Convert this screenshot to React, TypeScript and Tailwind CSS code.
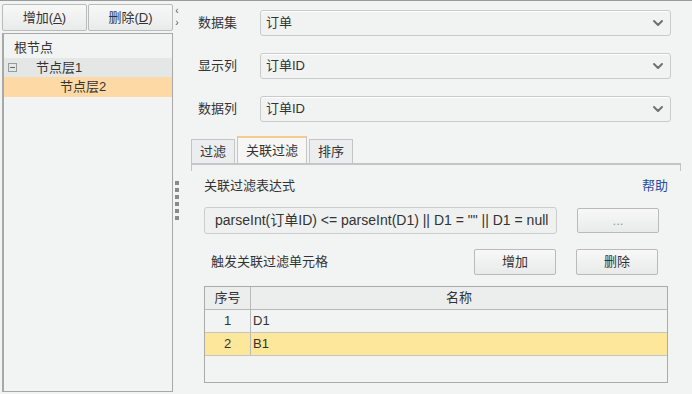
import React from "react";

const FONT = { fontFamily: '"Liberation Sans", "Noto Sans CJK SC", sans-serif' };

function Chevron() {
  return (
    <svg width="12" height="8" viewBox="0 0 12 8" className="shrink-0">
      <path d="M2 2 L6 6 L10 2" fill="none" stroke="#707070" strokeWidth="2" strokeLinecap="round" strokeLinejoin="round" />
    </svg>
  );
}

function SelectRow({ label, value }: { label: string; value: string }) {
  return (
    <div className="flex items-center h-[26px]">
      <span className="w-[62px] text-[13px] text-[#333]">{label}</span>
      <div className="flex-1 h-full flex items-center justify-between pl-[5px] pr-[6px] border border-[#c9cbcb] rounded-[3px] bg-[#f1f2f2] shadow-[inset_0_1px_0_#fff]">
        <span className="text-[13px] text-[#333]">{value}</span>
        <Chevron />
      </div>
    </div>
  );
}

function Btn({ children, className = "" }: { children: React.ReactNode; className?: string }) {
  return (
    <div className={"flex items-center justify-center border border-[#b9bbbb] rounded-[2px] bg-gradient-to-b from-[#f8f8f8] to-[#e9eaea] text-[13px] text-[#333] " + className}>
      {children}
    </div>
  );
}

export default function App() {
  return (
    <div className="w-[692px] h-[394px] bg-[#f2f3f3] border-t border-[#9a9a9a] flex overflow-hidden" style={FONT}>
      {/* Left tree panel */}
      <div className="w-[171px] ml-[2px] flex flex-col">
        <div className="flex gap-[1px] mt-[3px] h-[27px]">
          <Btn className="w-[85px]">增加(<span className="underline">A</span>)</Btn>
          <Btn className="flex-1">删除(<span className="underline">D</span>)</Btn>
        </div>
        <div className="mt-[2px] h-[359px] border border-[#a8a8a8] border-l-2 bg-[#f2f3f3] pt-[4px]">
          <div className="h-[20px] flex items-center pl-[10px] text-[13px] text-[#333]">根节点</div>
          <div className="h-[19px] flex items-center bg-[#e5e7e7] text-[13px] text-[#333]">
            <span className="ml-[4px] w-[9px] h-[9px] border border-[#9a9a9a] flex items-center justify-center">
              <span className="w-[5px] h-[1px] bg-[#666]" />
            </span>
            <span className="ml-[19px]">节点层1</span>
          </div>
          <div className="h-[20px] flex items-center bg-[#fcd9a5] text-[13px] text-[#333] pl-[56px]">节点层2</div>
        </div>
      </div>

      {/* Splitter */}
      <div className="w-[8px] flex flex-col items-center">
        <span className="mt-[4px] text-[10px] leading-[12px] text-[#555]">‹</span>
        <span className="text-[10px] leading-[12px] text-[#555]">›</span>
        <div className="mt-[152px] flex flex-col gap-[3px]">
          {[0, 1, 2, 3, 4, 5].map((i) => (
            <span key={i} className="w-[4px] h-[4px] bg-[#8a8a8a]" />
          ))}
        </div>
      </div>

      {/* Right panel */}
      <div className="flex-1 pl-[17px] pr-[21px] pt-[9px] flex flex-col">
        <div className="flex flex-col gap-[17px]">
          <SelectRow label="数据集" value="订单" />
          <SelectRow label="显示列" value="订单ID" />
          <SelectRow label="数据列" value="订单ID" />
        </div>

        {/* Tabs */}
        <div className="mt-[14px] -ml-[7px] -mr-[10px] flex items-end h-[27px] relative z-10">
          <div className="h-[24px] px-[8px] flex items-center border border-[#c5c7c7] border-b-0 bg-[#ecedee] text-[13px] text-[#333]">过滤</div>
          <div className="ml-[2px] h-[27px] px-[8px] flex items-center border border-[#c5c7c7] border-t-2 border-t-[#f7c98d] border-b-0 bg-[#f6f6f6] text-[13px] text-[#333]">关联过滤</div>
          <div className="ml-[2px] h-[24px] px-[8px] flex items-center border border-[#c5c7c7] border-b-0 bg-[#ecedee] text-[13px] text-[#333]">排序</div>
        </div>
        <div className="-ml-[7px] -mr-[10px] h-[8px] border-t-2 border-l border-r border-[#c4c6c6] border-b-0" />

        <div className="pl-[6px] pr-[3px] flex flex-col">
          <div className="mt-[6px] flex items-center justify-between h-[18px]">
            <span className="text-[13px] text-[#333]">关联过滤表达式</span>
            <span className="text-[13px] text-[#2a4c9c]">帮助</span>
          </div>
          <div className="mt-[12px] flex items-center h-[27px]">
            <div className="w-[353px] h-full flex items-center pl-[10px] border border-[#cbcdcd] rounded-[3px] bg-[#eff0f0] text-[14px] text-[#333] whitespace-nowrap overflow-hidden">
              parseInt(订单ID) &lt;= parseInt(D1) || D1 = "" || D1 = null
            </div>
            <Btn className="ml-[20px] w-[82px] h-[25px] text-[10px] text-[#999]">...</Btn>
          </div>
          <div className="mt-[15px] flex items-center h-[26px]">
            <span className="ml-[7px] text-[13px] text-[#333]">触发关联过滤单元格</span>
            <Btn className="ml-auto w-[82px] h-[26px]">增加</Btn>
            <Btn className="ml-[20px] w-[82px] h-[26px] mr-[10px]">删除</Btn>
          </div>

          {/* Table */}
          <div className="mt-[11px] h-[97px] border border-[#a9abab] bg-[#f2f3f3] text-[13px] text-[#333]">
            <div className="flex h-[23px] border-b border-[#b8baba] bg-[#eceded]">
              <div className="w-[46px] flex items-center justify-center border-r border-[#b8baba]">序号</div>
              <div className="flex-1 flex items-center justify-center">名称</div>
            </div>
            <div className="flex h-[23px] border-b border-[#c3c5c5]">
              <div className="w-[46px] flex items-center justify-center border-r border-[#b8baba]">1</div>
              <div className="flex-1 flex items-center pl-[2px]">D1</div>
            </div>
            <div className="flex h-[23px] border-b border-[#c3c5c5] bg-[#fde79a]">
              <div className="w-[46px] flex items-center justify-center border-r border-[#b8baba]">2</div>
              <div className="flex-1 flex items-center pl-[2px]">B1</div>
            </div>
          </div>
        </div>
      </div>
    </div>
  );
}
